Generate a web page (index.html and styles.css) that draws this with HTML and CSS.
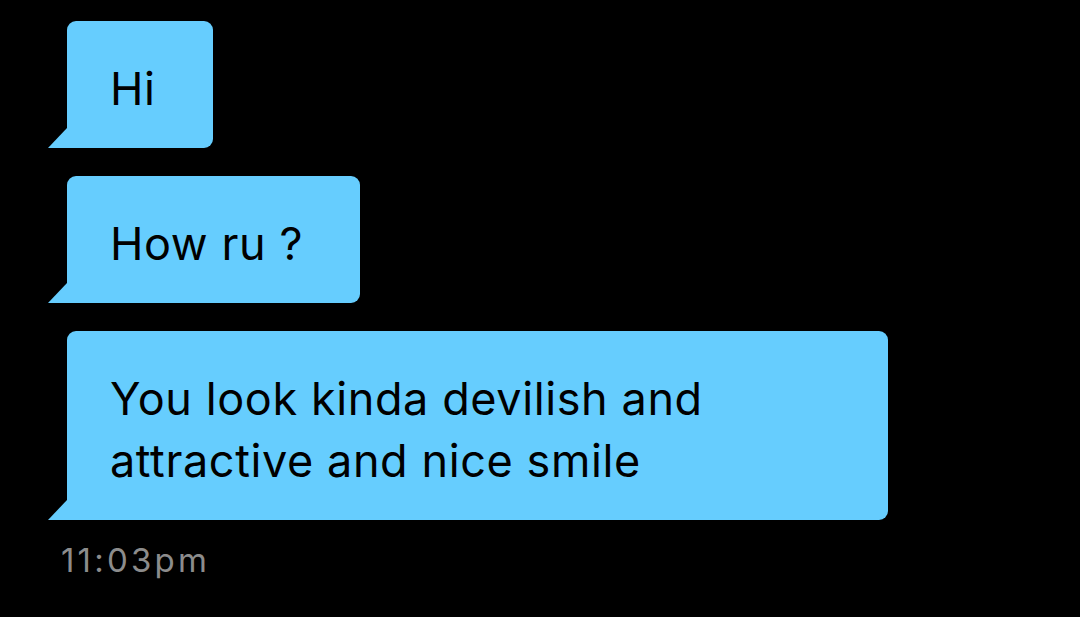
FILE: index.html
```html
<!DOCTYPE html>
<html>
<head>
<meta charset="utf-8">
<link rel="stylesheet" href="styles.css">
</head>
<body>
<div class="chat">
  <div class="bubble"><span class="msg">Hi</span></div>
  <div class="bubble"><span class="msg">How ru ?</span></div>
  <div class="bubble wide"><span class="msg">You look kinda devilish and attractive and nice smile</span></div>
  <div class="time">11:03pm</div>
</div>
</body>
</html>
```

FILE: styles.css
```css
html, body {
  margin: 0;
  padding: 0;
  background: #000;
  width: 1080px;
  height: 617px;
  overflow: hidden;
}
.chat {
  display: flex;
  flex-direction: column;
  align-items: flex-start;
  gap: 28px;
  padding: 21px 0 0 67px;
  font-family: Inter, sans-serif;
}
.bubble {
  position: relative;
  background: #66cdfe;
  color: #000;
  border-radius: 9px 9px 9px 0;
  padding: 37px 57px 28px 43px;
  font-size: 45px;
  line-height: 62px;
  letter-spacing: 0.6px;
}
.bubble::before {
  content: "";
  position: absolute;
  left: -19px;
  bottom: 0;
  width: 19px;
  height: 20px;
  background: #66cdfe;
  clip-path: polygon(100% 0, 100% 100%, 0 100%);
}
.bubble.wide {
  width: 721px;
}
.time {
  margin: -8px 0 0 -6px;
  color: #8c8c8c;
  font-size: 33px;
  line-height: 40px;
  letter-spacing: 3.2px;
}
```
